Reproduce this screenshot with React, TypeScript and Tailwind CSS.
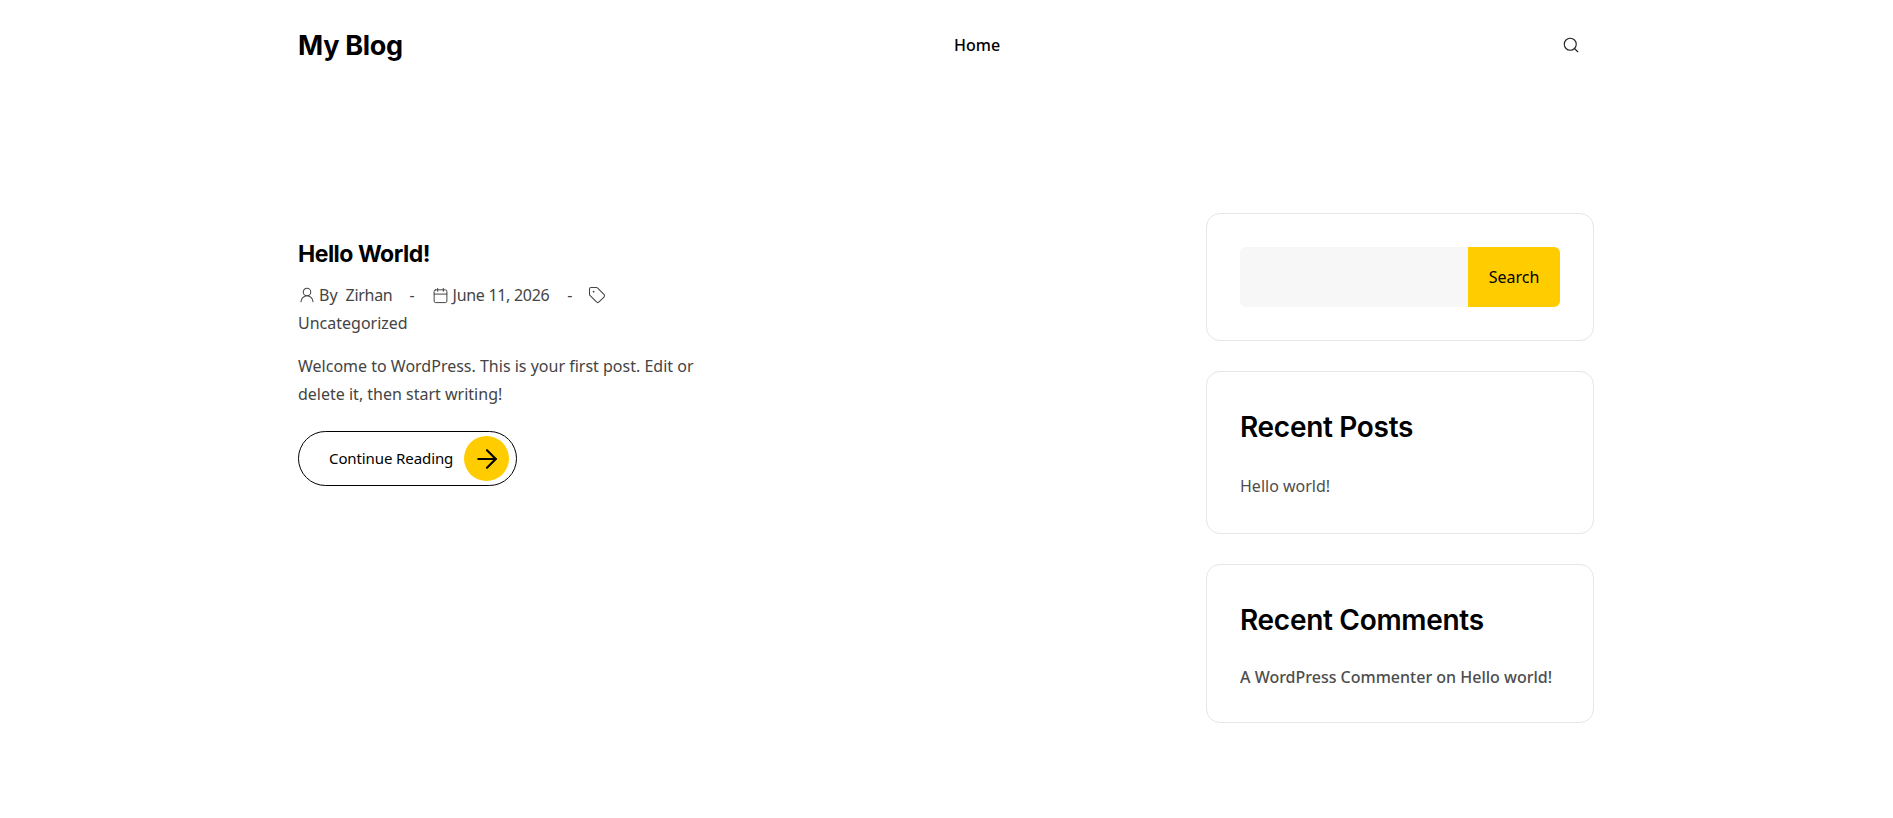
import { ArrowRight, Calendar, Search, Tag, UserRound } from "lucide-react";

const heading = "font-['Inter',sans-serif]";

function Card({
  title,
  bodyClass,
  children,
}: {
  title: string;
  bodyClass: string;
  children: React.ReactNode;
}) {
  return (
    <section className="rounded-[14px] border border-[#e6e6e6] bg-white px-[33px] pt-[35px]">
      <h2 className={`${heading} text-[28px] leading-[40px] font-semibold tracking-[-0.3px] text-black`}>{title}</h2>
      <div className={`${bodyClass} text-[16px] leading-[24px] text-[#4d4d4d]`}>{children}</div>
    </section>
  );
}

export default function App() {
  return (
    <div className="min-h-[818px] bg-white font-['Noto_Sans',sans-serif] text-[#444]">
      <div className="ml-[298px] w-[1296px]">
        <header className="grid h-[90px] grid-cols-[656px_auto_1fr] items-center">
          <a className={`${heading} pt-[2px] text-[27px] font-bold tracking-[-0.3px] text-black`}>My Blog</a>
          <nav className="text-[16px] font-medium text-black">Home</nav>
          <div className="flex justify-end pr-[14px]">
            <Search size={18} strokeWidth={1.5} color="#222" />
          </div>
        </header>

        <main className="mt-[123px] flex justify-between">
          <article className="w-[420px] pt-[24px]">
            <h1 className={`${heading} text-[23px] leading-[34px] font-bold tracking-[-0.5px] text-black`}>Hello World!</h1>
            <div className="mt-[10px] text-[16px] leading-[28px]">
              <div className="flex items-center">
                <UserRound size={18} strokeWidth={1.4} />
                <span className="ml-[3px]">By</span>
                <span className="ml-[8px] tracking-[-0.3px]">Zirhan</span>
                <span className="mr-[17px] ml-[17px]">-</span>
                <Calendar size={17} strokeWidth={1.4} />
                <span className="ml-[4px] tracking-[-0.3px]">June 11, 2026</span>
                <span className="mr-[15px] ml-[18px]">-</span>
                <Tag size={18} strokeWidth={1.4} />
              </div>
              <div>Uncategorized</div>
            </div>
            <p className="mt-[15px] text-[16px] leading-[28px]">
              Welcome to WordPress. This is your first post. Edit or delete it, then start writing!
            </p>
            <a className="mt-[23px] flex h-[55px] w-[219px] items-center justify-between rounded-full border border-black pr-[7px] pl-[30px] text-[15px] tracking-[-0.1px] text-black">
              Continue Reading
              <span className="flex h-[45px] w-[45px] items-center justify-center rounded-full bg-[#ffcc00]">
                <ArrowRight size={30} strokeWidth={1.7} color="#000" />
              </span>
            </a>
          </article>

          <aside className="flex w-[388px] flex-col gap-[30px]">
            <section className="rounded-[14px] border border-[#e6e6e6] bg-white px-[33px] pt-[33px] pb-[33px]">
              <div className="flex h-[60px]">
                <div className="flex-1 rounded-l-[6px] bg-[#f7f7f7]" />
                <button className="w-[92px] rounded-r-[6px] bg-[#ffcc00] text-[16px] text-black">Search</button>
              </div>
            </section>
            <Card title="Recent Posts" bodyClass="mt-[27px] pb-[35px]">
              Hello world!
            </Card>
            <Card title="Recent Comments" bodyClass="mt-[25px] pb-[33px]">
              <span className="font-medium">A WordPress Commenter on Hello world!</span>
            </Card>
          </aside>
        </main>
      </div>
    </div>
  );
}
